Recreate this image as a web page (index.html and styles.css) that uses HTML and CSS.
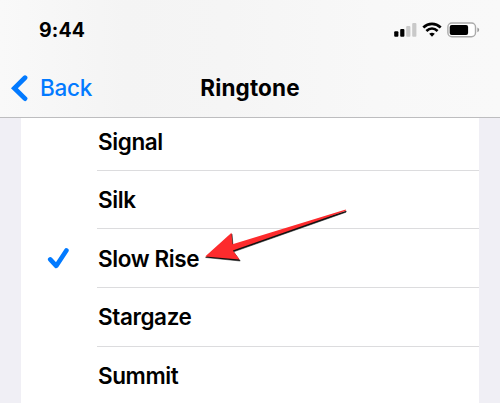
FILE: index.html
```html
<!DOCTYPE html>
<html lang="en">
<head>
    <meta charset="UTF-8">
    <meta content="width=device-width, initial-scale=1.0" name="viewport">
    <title>Ringtone</title>
    <link rel="stylesheet" href="styles.css">
</head>
<body>
<header class="header">
    <div class="status-bar">
        <span class="time">9:44</span>
        <svg class="status-icons" width="88" height="18" viewBox="0 0 88 18">
            <!-- Signal -->
            <rect x="2.2" y="9.2" width="4.2" height="5.5" rx="1" fill="#000"/>
            <rect x="8.2" y="7" width="4.2" height="7.7" rx="1" fill="#000"/>
            <rect x="14.2" y="4" width="4.2" height="10.7" rx="1" fill="#c9c9c9"/>
            <rect x="20.2" y="1" width="4.2" height="13.7" rx="1" fill="#c9c9c9"/>
            <!-- Wi-Fi -->
            <g fill="none" stroke="#000" stroke-width="2.7">
                <path d="M31.3 5.4C36.5.6 43.5.6 48.7 5.4"/>
                <path d="M34.4 9C37.8 5.9 42.2 5.9 45.6 9"/>
            </g>
            <path d="M37.2 11.8Q40 9.6 42.8 11.8L40 14.7Z" fill="#000"/>
            <!-- Battery -->
            <rect x="55.9" y="1" width="27.6" height="13.7" rx="4" fill="#fff" stroke="#aaa" stroke-width="1.4"/>
            <rect x="57.7" y="3" width="18.4" height="10" rx="2" fill="#000"/>
            <path d="M85.4 5.5Q87.2 6.2 87.2 7.8T85.4 10.2Z" fill="#999"/>
        </svg>
    </div>
    <nav class="nav-bar">
        <a class="back">
            <svg width="18" height="28" viewBox="0 0 18 28">
                <path d="M15 3.8L4.4 14.2L15 24.6"/>
            </svg>
            <span>Back</span>
        </a>
        <h1 class="title">Ringtone</h1>
    </nav>
</header>
<main class="content">
    <ul class="tone-list">
        <li class="tone"><span class="mark"></span><span class="name signal">Signal</span></li>
        <li class="tone"><span class="mark"></span><span class="name">Silk</span></li>
        <li class="tone">
            <span class="mark">
                <svg width="24" height="24" viewBox="0 0 24 24">
                    <path d="M3.2 12.4L9.2 18.9L19.4 3.4"/>
                </svg>
            </span>
            <span class="name">Slow Rise</span>
        </li>
        <li class="tone"><span class="mark"></span><span class="name">Stargaze</span></li>
        <li class="tone"><span class="mark"></span><span class="name">Summit</span></li>
    </ul>
</main>
<svg class="arrow" width="150" height="60" viewBox="200 205 150 60">
    <path d="M205.6 257.5L232 234L233 245.5L346.2 211L346 212.2L233.6 251.8L240.2 261Z" fill="#111" stroke="#111" stroke-width=".5"/>
    <path d="M205.2 256.6L231.5 232.8L232.5 244.3L345.8 209.4L345.8 210.7L232.8 250.6L239.6 259.5Z" fill="#fd2b2d"/>
</svg>
</body>
</html>
```
FILE: styles.css
```css
body {
    margin: 0;
    height: 403px;
    overflow: hidden;
    position: relative;
    background-color: #f0eff5;
    font-family: Inter, "Liberation Sans", sans-serif;
    color: #000;
}

.header {
    height: 117px;
    border-bottom: 1px solid #bdbdbf;
    background: linear-gradient(90deg, #f9f9f9 0, #f4f4f4 25%, #f5f5f5 45%, #f8f8f8 75%, #f9f9f9 100%);
}

.status-bar {
    display: flex;
    justify-content: space-between;
    align-items: center;
    height: 60px;
    padding: 0 20px 0 39px;
    box-sizing: border-box;
}

.time {
    font-size: 19.5px;
    font-weight: 700;
    letter-spacing: 0.15px;
}

.status-icons {
    margin: 1px 0 0;
}

.nav-bar {
    display: grid;
    grid-template-columns: 1fr auto 1fr;
    align-items: center;
    height: 55px;
}

.back {
    display: flex;
    align-items: center;
    gap: 12px;
    padding-left: 10px;
    color: #027aff;
    font-size: 22.5px;
    font-weight: 500;
    letter-spacing: -0.3px;
}

.back svg {
    fill: none;
    stroke: #027aff;
    stroke-width: 4.8;
    stroke-linecap: round;
}

.title {
    margin: 0;
    font-size: 22.5px;
    font-weight: 700;
    letter-spacing: 0.15px;
}

.tone-list {
    list-style: none;
    margin: 0 21px;
    padding: 0;
    height: 285px;
    overflow: hidden;
    background-color: #fff;
}

.tone {
    display: flex;
    height: 58.67px;
}

.tone:first-child {
    height: 52.6px;
}

/* Check mark column */
.mark {
    display: flex;
    align-items: center;
    justify-content: center;
    width: 76px;
}

.mark svg {
    fill: none;
    stroke: #027aff;
    stroke-width: 4.6;
    stroke-linecap: round;
    stroke-linejoin: round;
}

.name {
    flex: 1;
    display: flex;
    align-items: center;
    box-sizing: border-box;
    padding-left: 1px;
    border-bottom: 1px solid #dcdcde;
    font-size: 22.5px;
    font-weight: 600;
    letter-spacing: -0.4px;
}

.signal {
    padding-bottom: 5px;
}

/* Callout arrow over the list */
.arrow {
    position: absolute;
    left: 200px;
    top: 205px;
}
```
